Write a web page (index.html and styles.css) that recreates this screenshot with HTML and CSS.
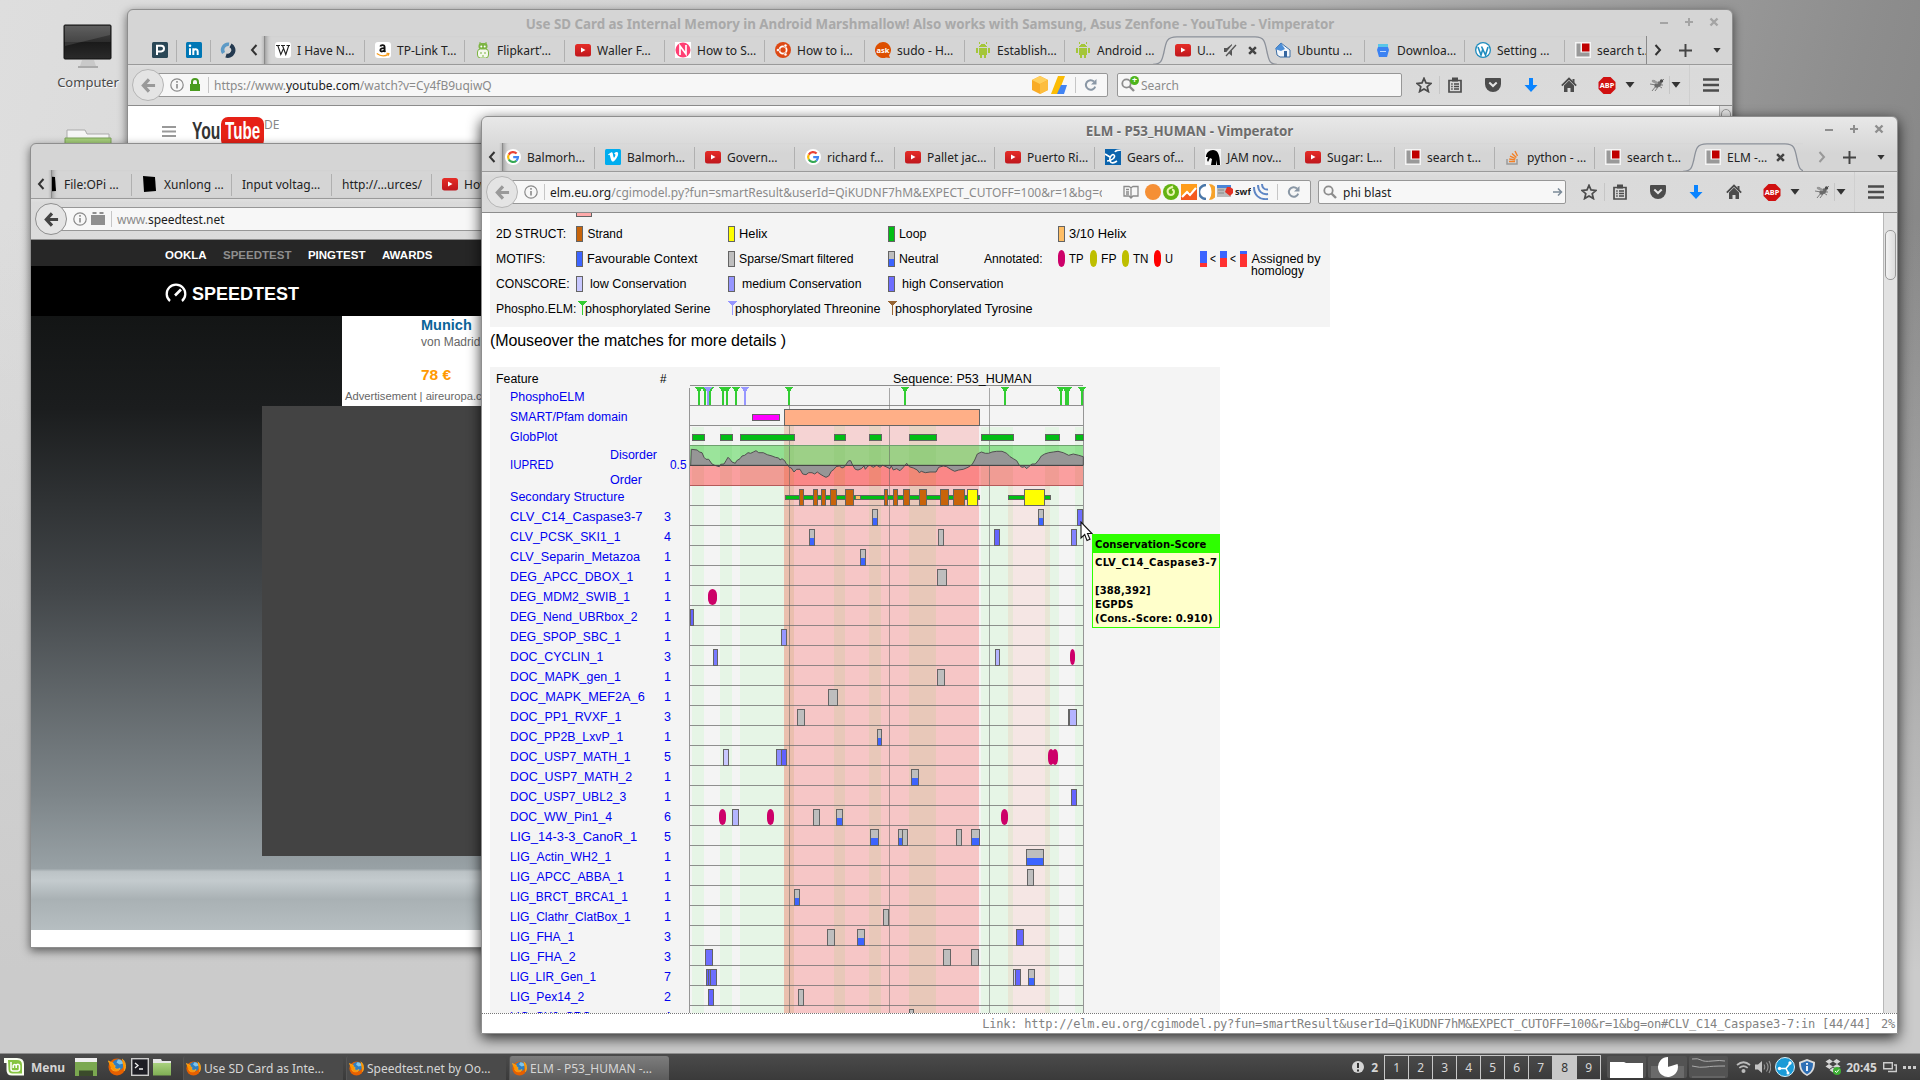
FILE: index.html
```html
<!DOCTYPE html>
<html lang="en">
<head>
<meta charset="utf-8">
<title>Desktop</title>
<link rel="stylesheet" href="styles.css">
</head>
<body>
<svg class="defs" aria-hidden="true">
  <defs>
    <linearGradient id="g-red" x1="0" y1="0" x2="0" y2="1"><stop offset="0" stop-color="#e52d27"/><stop offset="1" stop-color="#bf171d"/></linearGradient>
    <linearGradient id="g-screen" x1="0" y1="0" x2="0" y2="1"><stop offset="0" stop-color="#4a4a4a"/><stop offset=".5" stop-color="#2c2c2c"/><stop offset=".5" stop-color="#1a1a1a"/><stop offset="1" stop-color="#2a2a2a"/></linearGradient>
    <linearGradient id="g-green" x1="0" y1="0" x2="0" y2="1"><stop offset="0" stop-color="#a9d17e"/><stop offset="1" stop-color="#7fae54"/></linearGradient>
    <symbol id="i-yt" viewBox="0 0 16 16"><rect y="2" width="16" height="12.500" rx="2.500" fill="url(#g-red)"/><path d="M6 5.500v5l4.500-2.500z" fill="#fff"/></symbol>
    <symbol id="i-google" viewBox="0 0 16 16"><circle cx="8" cy="8" r="8" fill="#fff"/><g fill="none" stroke-width="2.200"><path d="M11.600 4.600A4.900 4.900 0 0 0 3.800 5.600" stroke="#ea4335"/><path d="M3.800 5.600a5 5 0 0 0 0 4.900" stroke="#fbbc05"/><path d="M3.800 10.500a4.900 4.900 0 0 0 7.600 1.200" stroke="#34a853"/><path d="M11.400 11.700A4.900 4.900 0 0 0 13 8.100H8.200" stroke="#4285f4"/></g></symbol>
    <symbol id="i-vimeo" viewBox="0 0 16 16"><rect width="16" height="16" rx="1.500" fill="#00adef"/><path d="M3 5.600l3-2.200c1.300-.6 1.700.4 2 2 .3 1.900.6 3.200 1 3.200s1.400-1.800 1.400-2.700-.8-.9-1.400-.7c.5-1.600 1.500-2.400 2.700-2.300 1.600.1 1.600 1.700 1.300 3-.6 2.300-3.600 6.700-5.200 6.700-1.700 0-2.200-3.800-2.900-6.200-.3-.9-.7-.7-1.400-.2z" fill="#fff"/></symbol>
    <symbol id="i-elm" viewBox="0 0 16 16"><rect width="16" height="16" fill="#f4f4f4"/><path d="M1.500 1.500h4v9h9v4h-13z" fill="#999"/><rect x="7" y="1.500" width="7.500" height="8" fill="#c00000"/></symbol>
    <symbol id="i-p" viewBox="0 0 16 16"><rect width="16" height="16" rx="1.500" fill="#2a4756"/><path d="M5 13V3.800h4.200a2.600 2.600 0 0 1 0 5.600H5" fill="none" stroke="#fff" stroke-width="2"/></symbol>
    <symbol id="i-in" viewBox="0 0 16 16"><rect width="16" height="16" rx="1.500" fill="#0077b5"/><path d="M4 6.300V13M7.300 13V6.300M7.300 9.500c0-3 4.400-3.200 4.400 0V13" fill="none" stroke="#fff" stroke-width="2"/><circle cx="4" cy="3.700" r="1.300" fill="#fff"/></symbol>
    <symbol id="i-disc" viewBox="0 0 16 16"><path d="M9 2.300A5.600 5.600 0 0 0 3.600 11" stroke="#5d9ac6" stroke-width="3.600" fill="none"/><path d="M10.500 3.300A5.600 5.600 0 0 1 6 13.500" stroke="#243a50" stroke-width="4.200" fill="none"/></symbol>
    <symbol id="i-wiki" viewBox="0 0 16 16"><rect width="16" height="16" rx="3" fill="#fff"/><path d="M1 3.500h4M6 3.500h4M11.500 3.500H15M2.800 3.500l3 9L8.300 7M7.500 3.500l3.300 9 3-9" fill="none" stroke="#222" stroke-width="1.100"/></symbol>
    <symbol id="i-amazon" viewBox="0 0 16 16"><rect width="16" height="16" rx="3" fill="#fff"/><path d="M5.300 4.500c.5-2 4.300-2 4.300.5v3.500c0 .7.500 1 .8 1.300M9.600 6.200C7 6 5.300 6.600 5.300 8.300s3.600 1.700 4.300-.8" fill="none" stroke="#111" stroke-width="1.800"/><path d="M1.800 11.500c4 3 8 3 11.700.6M11.500 11.400l2.300.2-.5 2" fill="none" stroke="#f79c1c" stroke-width="1.300"/></symbol>
    <symbol id="i-flip" viewBox="0 0 16 16"><rect x="3.500" y="1" width="9" height="6.500" rx="3" fill="#7db443"/><rect x="2.500" y="7" width="11" height="9" rx="3" fill="#f4f8ee" stroke="#7db443"/><path d="M5 11h2M9 11h2M8 13v2M5 0v2M11 0v2" stroke="#7db443"/><circle cx="6.300" cy="4.500" r="1" fill="#fff"/><circle cx="9.700" cy="4.500" r="1" fill="#fff"/></symbol>
    <symbol id="i-pink" viewBox="0 0 16 16"><rect width="16" height="16" fill="#fff"/><circle cx="8" cy="8" r="7.500" fill="#ff3f73"/><path d="M5 13V4l6 8V3" fill="none" stroke="#fff" stroke-width="1.700"/></symbol>
    <symbol id="i-ubuntu" viewBox="0 0 16 16"><circle cx="8" cy="8" r="8" fill="#dd4814"/><circle cx="8" cy="8" r="3.600" fill="none" stroke="#fff" stroke-width="1.800"/><g fill="#fff" stroke="#dd4814" stroke-width=".6"><circle cx="3" cy="8" r="1.600"/><circle cx="10.500" cy="3.600" r="1.600"/><circle cx="10.500" cy="12.400" r="1.600"/></g></symbol>
    <symbol id="i-ask" viewBox="0 0 16 16"><path d="M8 0a8 8 0 0 1 6 13.200l1 2.800-4-.6A8 8 0 1 1 8 0z" fill="#dd4f00"/><text x="8" y="10.500" font-family="Noto Sans" font-size="7.500" font-weight="700" fill="#fff" text-anchor="middle">ask</text></symbol>
    <symbol id="i-android" viewBox="0 0 16 16" shape-rendering="crispEdges"><g fill="#a4c639"><path d="M4 5c0-4 8-4 8 0zM4 6h8v7H4zM1 6h2v5H1zM13 6h2v5h-2zM5 13h2v3H5zM9 13h2v3H9zM4 0h1v2H4zM11 0h1v2h-1z"/></g></symbol>
    <symbol id="i-house" viewBox="0 0 16 16"><path d="M1 6l5-5 9 7v7H5L2 13z" fill="#f2f6fb" stroke="#3c6ea5"/><path d="M0 7l6-6 4 6-4 2z" fill="#4d8fd8"/><path d="M9 15V9h3v6z" fill="#3566a0"/></symbol>
    <symbol id="i-dl" viewBox="0 0 16 16"><path d="M3 2h10v4H3z" fill="#59c6e8"/><path d="M3 5h10l1 3-2 7H4L2 8z" fill="#3b82f2"/><path d="M5 9h6v1H5z" fill="#bcd8ff"/></symbol>
    <symbol id="i-wp" viewBox="0 0 16 16"><circle cx="8" cy="8" r="8" fill="#1e8cbe"/><circle cx="8" cy="8" r="6.700" fill="#fff"/><path d="M3 5l3 8L8 6.500M6.500 4.500l4 8.500L13 5" fill="none" stroke="#1e8cbe" stroke-width="1.600"/></symbol>
    <symbol id="i-gears" viewBox="0 0 16 16"><rect width="16" height="16" fill="#0b64ad"/><path d="M2 12c5 0 9-4 7-6s-5 3-4 6 4 2 7 0M0 5l5 3M10 3c1-2 4-2 6-2" stroke="#fff" fill="none" stroke-width="1.600"/></symbol>
    <symbol id="i-jam" viewBox="0 0 16 16"><rect width="16" height="16" fill="#f5f5f5"/><path d="M1 8c0-4 3-7 7-7s7 3 7 15h-3v-5l-1 5H6l1-6-2-1-2 4-1-2 1-3z" fill="#000"/></symbol>
    <symbol id="i-so" viewBox="0 0 16 16"><path d="M2 10v5h10v-5" fill="none" stroke="#9a9a9a" stroke-width="1.500"/><path d="M4 12.500h6M4.200 10l6 .9M5 7.200l5.500 2.400M7 4.500l4.400 4M10 2l2.500 5" stroke="#f48024" stroke-width="1.400"/></symbol>
    <symbol id="i-blk" viewBox="0 0 16 16"><path d="M1 0l12 1 1 14-12 1z" fill="#000"/></symbol>
    <symbol id="i-back" viewBox="0 0 16 16"><path d="M8.500 1.500L2.500 8l6 6.500M3 8h12" fill="none" stroke="currentColor" stroke-width="3.400"/></symbol>
    <symbol id="i-info" viewBox="0 0 14 14"><circle cx="7" cy="7" r="6.200" fill="none" stroke="#8a8a8a" stroke-width="1.200"/><path d="M7 6v4.500M7 3v1.700" stroke="#8a8a8a" stroke-width="1.600"/></symbol>
    <symbol id="i-lock" viewBox="0 0 12 14"><rect x="1" y="6" width="10" height="7" fill="#4a9b1f"/><path d="M3 6V4a3 3 0 0 1 6 0v2" fill="none" stroke="#4a9b1f" stroke-width="2"/></symbol>
    <symbol id="i-lego" viewBox="0 0 14 14"><path d="M0 3h14v10H0zM1.500 0h4v2h-4zM8.500 0h4v2h-4z" fill="#8f8f8f"/></symbol>
    <symbol id="i-reload" viewBox="0 0 14 14"><path d="M11.200 8.600A4.800 4.800 0 1 1 10 3.500" fill="none" stroke="#8a97a5" stroke-width="2"/><path d="M12.500 1v5.500H7z" fill="#8a97a5"/></symbol>
    <symbol id="i-mag" viewBox="0 0 14 14"><circle cx="5.500" cy="5.500" r="4.200" fill="none" stroke="#8d8d8d" stroke-width="1.800"/><path d="M8.500 8.500l4.500 4.500" stroke="#8d8d8d" stroke-width="2.400"/></symbol>
    <symbol id="i-star" viewBox="0 0 16 16"><path d="M8 1.300l2 4.600 5 .5-3.800 3.300 1.200 4.900L8 12l-4.400 2.600 1.200-4.900L1 6.400l5-.5z" fill="none" stroke="#4c4c4c" stroke-width="1.700"/></symbol>
    <symbol id="i-clip" viewBox="0 0 16 16"><path d="M2 3.500h12v11.500H2z" fill="none" stroke="#4c4c4c" stroke-width="1.700"/><path d="M5 .5h6v4H5z" fill="#4c4c4c"/><path d="M4.200 7h1.500M4.200 9.500h1.500M4.200 12h1.500M7 7h5M7 9.500h5M7 12h5" stroke="#4c4c4c" stroke-width="1.300"/></symbol>
    <symbol id="i-pocket" viewBox="0 0 16 16"><path d="M0 2q0-1 1-1h14q1 0 1 1v5a8 8 0 0 1-16 0z" fill="#4c4c4c"/><path d="M4.300 5.500L8 9l3.700-3.500" fill="none" stroke="#e4e4e4" stroke-width="2"/></symbol>
    <symbol id="i-down" viewBox="0 0 16 16"><path d="M6 1h4v7h4.500L8 15 1.500 8H6z" fill="#0a84ff"/></symbol>
    <symbol id="i-home" viewBox="0 0 16 16"><path d="M8 3.500l5 5V15H9.500v-4h-3v4H3V8.500z" fill="#4c4c4c"/><path d="M.8 8.600L8 1.600l7.200 7" fill="none" stroke="#4c4c4c" stroke-width="1.800"/><path d="M11.500 2h2v4h-2z" fill="#4c4c4c"/></symbol>
    <symbol id="i-abp" viewBox="0 0 18 18"><path d="M5.300 0h7.400L18 5.300v7.400L12.700 18H5.300L0 12.700V5.300z" fill="#d01010"/><text x="9" y="12" font-family="Noto Sans" font-size="7.800" font-weight="700" fill="#fff" text-anchor="middle">ABP</text></symbol>
    <symbol id="i-bug" viewBox="0 0 16 16"><path d="M3 14l4-5M1 7l6 1M6 14l3-4M5 3l3 4M15 2l-4 4M13 11l-3-2M14 8h-3" stroke="#7b7b7b" fill="none"/><ellipse cx="9" cy="7.500" rx="4" ry="2.400" fill="#6a6a6a" transform="rotate(-35 9 7.500)"/><ellipse cx="6" cy="5" rx="3.500" ry="1.500" fill="#999" transform="rotate(25 6 5)"/><circle cx="12.500" cy="4" r="1.700" fill="#4a4a4a"/></symbol>
    <symbol id="i-ham" viewBox="0 0 16 14"><path d="M0 1.500h16M0 7h16M0 12.500h16" stroke="#4c4c4c" stroke-width="2.600"/></symbol>
    <symbol id="i-caret" viewBox="0 0 10 6"><path d="M.5 0h9L5 5.800z" fill="#333"/></symbol>
    <symbol id="i-left" viewBox="0 0 8 12"><path d="M6.500 1L2 6l4.500 5" fill="none" stroke="#333" stroke-width="2"/></symbol>
    <symbol id="i-right" viewBox="0 0 8 12"><path d="M1.500 1L6 6l-4.500 5" fill="none" stroke="currentColor" stroke-width="2"/></symbol>
    <symbol id="i-plus" viewBox="0 0 12 12"><path d="M6 0v12M0 6h12" stroke="#444" stroke-width="1.800"/></symbol>
    <symbol id="i-x" viewBox="0 0 8 8"><path d="M1 1l6 6M7 1L1 7" stroke="#444" stroke-width="2.200"/></symbol>
    <symbol id="i-mute" viewBox="0 0 14 14"><path d="M1 5h3l5-4v12L4 9H1z" fill="#555"/><path d="M2 13L12 1" stroke="#d9d9d9" stroke-width="3"/><path d="M3 13L13 2" stroke="#555" stroke-width="1.300"/></symbol>
    <symbol id="i-ff" viewBox="0 0 18 18"><circle cx="9" cy="9" r="8.500" fill="#e66000"/><circle cx="10" cy="6.800" r="5.600" fill="#2f7fc1"/><path d="M10 1.500c3 0 5 2 5.500 4l-4 1-3-2z" fill="#7fc4ea"/><path d="M0 3c2 0 3 2 5 2 0 2 3 2 2 4s3 3 5 1c0 4-8 4-9 0M14 1c4 2 4.500 9 2 12" fill="#ff9500" stroke="#ffb52b" stroke-width=".7"/></symbol>
    <symbol id="win-btns" viewBox="0 0 64 12"><g stroke="currentColor" stroke-width="2" fill="none"><path d="M1 7h8M26 6h8M30 2v8"/><path d="M51.500 2.500l7 7M58.500 2.500l-7 7" stroke-width="2.400"/></g></symbol>
    <symbol id="i-tab" viewBox="0 0 124 29"><path d="M0 29C9 28.500 9 24 11 16 13 5 14 1 24 1h78c9 0 10 4 12 15 2 8 2 12.500 10 13z" fill="#dadada"/><path d="M0 28.500C9 28 9 24 11 16 13 5 14 .8 24 .8h78c9 0 10 4.200 12 15.200 2 8 2 12 10 12.500" fill="none" stroke="#8c919a" stroke-width="1.300"/></symbol>
  </defs>
</svg>

<main class="desktop">
  <div class="desk-icon computer">
    <svg width="50" height="46" viewBox="0 0 50 46"><rect x="1" y="1" width="47" height="34" rx="1" fill="url(#g-screen)" stroke="#111"/><path d="M2 2h45v9L2 22z" fill="#fff" opacity=".12"/><path d="M19 36h12l2 6H17z" fill="#c9c9c9"/><path d="M15 42h20v2H15z" fill="#aaa"/></svg>
    <span>Computer</span>
  </div>
  <div class="desk-icon folder">
    <svg width="48" height="40" viewBox="0 0 48 40"><path d="M3 1h18l2 4h22v8H3z" fill="#f6f6f6" stroke="#aaa"/><path d="M1 9h46v30H1z" fill="url(#g-green)" stroke="#7da35a"/></svg>
  </div>

  <section class="window win-youtube">
    <header class="titlebar"><span>Use SD Card as Internal Memory in Android Marshmallow! Also works with Samsung, Asus Zenfone - YouTube - Vimperator</span><svg class="btns"><use href="#win-btns"/></svg></header>
    <div class="tabstrip">
      <div class="pinned"><svg><use href="#i-p"/></svg></div>
      <div class="pinned"><svg><use href="#i-in"/></svg></div>
      <div class="pinned last"><svg><use href="#i-disc"/></svg></div>
      <div class="scroll-left"><svg><use href="#i-left"/></svg></div>
      <div class="tabs">
        <div class="tab"><svg><use href="#i-wiki"/></svg>I Have N…</div>
        <div class="tab"><svg><use href="#i-amazon"/></svg>TP-Link T…</div>
        <div class="tab"><svg><use href="#i-flip"/></svg>Flipkart’…</div>
        <div class="tab"><svg><use href="#i-yt"/></svg>Waller F…</div>
        <div class="tab"><svg><use href="#i-pink"/></svg>How to S…</div>
        <div class="tab"><svg><use href="#i-ubuntu"/></svg>How to i…</div>
        <div class="tab"><svg><use href="#i-ask"/></svg>sudo - H…</div>
        <div class="tab"><svg><use href="#i-android"/></svg>Establish…</div>
        <div class="tab nosep"><svg><use href="#i-android"/></svg>Android …</div>
        <div class="tab nosep active"><svg class="shape"><use href="#i-tab"/></svg><svg><use href="#i-yt"/></svg>U…<svg class="mute"><use href="#i-mute"/></svg><svg class="x"><use href="#i-x"/></svg></div>
        <div class="tab"><svg><use href="#i-house"/></svg>Ubuntu …</div>
        <div class="tab"><svg><use href="#i-dl"/></svg>Downloa…</div>
        <div class="tab"><svg><use href="#i-wp"/></svg>Setting …</div>
        <div class="tab nosep"><svg><use href="#i-elm"/></svg>search t…</div>
      </div>
      <div class="strip-end shade"><svg class="r"><use href="#i-right"/></svg><svg class="p"><use href="#i-plus"/></svg><svg class="c"><use href="#i-caret"/></svg></div>
    </div>
    <nav class="navbar">
      <div class="back dim"><svg><use href="#i-back"/></svg></div>
      <div class="urlbar"><svg class="info"><use href="#i-info"/></svg><svg class="lock"><use href="#i-lock"/></svg><i></i><span class="url">https://www.<b>youtube.com</b>/watch?v=Cy4fB9uqiwQ</span>
        <div class="url-icons"><svg width="18" height="18" viewBox="0 0 18 18"><path d="M9 0l8 4v10l-8 4-8-4V4z" fill="#f9ab25"/><path d="M9 0l8 4-8 4-8-4z" fill="#ffcf5c"/><path d="M9 8v10l8-4V4z" fill="#fdbd3e"/></svg><svg width="18" height="18" viewBox="0 0 18 18"><path d="M8 0h7L8 18H1z" fill="#fbbc05"/><path d="M11 9h6l-3 9H7z" fill="#4284f3"/></svg><i></i><svg class="reload"><use href="#i-reload"/></svg></div>
      </div>
      <div class="search hint"><svg><use href="#i-mag"/></svg><em class="plus">+</em>Search</div>
      <div class="tools"><svg><use href="#i-star"/></svg><i></i><svg><use href="#i-clip"/></svg><svg><use href="#i-pocket"/></svg><svg><use href="#i-down"/></svg><svg><use href="#i-home"/></svg><svg class="abp"><use href="#i-abp"/></svg><svg class="car"><use href="#i-caret"/></svg><svg class="bug"><use href="#i-bug"/></svg><i class="s2"></i><svg class="car2"><use href="#i-caret"/></svg><i class="s3"></i><svg class="ham"><use href="#i-ham"/></svg></div>
    </nav>
    <div class="page yt-page">
      <svg width="14" height="11" viewBox="0 0 14 11"><path d="M0 1h14M0 5.500h14M0 10h14" stroke="#999" stroke-width="1.800"/></svg>
      <div class="yt-logo"><span>You</span><b><span>Tube</span></b><small>DE</small></div>
      <div class="yt-scroll"></div>
    </div>
  </section>

  <section class="window win-speed">
    <header class="titlebar"></header>
    <div class="tabstrip">
      <div class="scroll-left"><svg><use href="#i-left"/></svg></div>
      <div class="tabs clipped">
        <div class="tab"><svg><use href="#i-blk"/></svg>File:OPi …</div>
        <div class="tab"><svg><use href="#i-blk"/></svg>Xunlong …</div>
        <div class="tab">Input voltag…</div>
        <div class="tab">http://…urces/</div>
        <div class="tab"><svg><use href="#i-yt"/></svg>How to…</div>
      </div>
    </div>
    <nav class="navbar">
      <div class="back"><svg><use href="#i-back"/></svg></div>
      <div class="urlbar"><svg class="info"><use href="#i-info"/></svg><svg class="lego"><use href="#i-lego"/></svg><i></i><span class="url">www.<b>speedtest.net</b></span></div>
    </nav>
    <div class="page st-page">
      <div class="st-nav"><span>OOKLA</span><span class="off">SPEEDTEST</span><span>PINGTEST</span><span>AWARDS</span></div>
      <div class="st-head"><svg width="22" height="20" viewBox="0 0 22 20"><path d="M5 18A9.300 9.300 0 1 1 17 18" fill="none" stroke="#fff" stroke-width="2.300"/><path d="M10 12.500l6-6" stroke="#fff" stroke-width="2.600"/></svg><svg class="st-word" width="108" height="20"><text x="0" y="16.500" textLength="107" lengthAdjust="spacingAndGlyphs">SPEEDTEST</text></svg></div>
      <div class="st-body">
        <div class="ad"><strong>Munich</strong><span>von Madrid</span><em>78 €</em><small>Advertisement | aireuropa.com</small></div>
        <div class="dark"></div>
      </div>
      <div class="st-foot"></div>
    </div>
  </section>

  <section class="window win-elm">
    <header class="titlebar"><span>ELM - P53_HUMAN - Vimperator</span><svg class="btns"><use href="#win-btns"/></svg></header>
    <div class="tabstrip">
      <div class="scroll-left"><svg><use href="#i-left"/></svg></div>
      <div class="tabs clipped">
        <div class="tab"><svg><use href="#i-google"/></svg>Balmorh…</div>
        <div class="tab"><svg><use href="#i-vimeo"/></svg>Balmorh…</div>
        <div class="tab"><svg><use href="#i-yt"/></svg>Govern…</div>
        <div class="tab"><svg><use href="#i-google"/></svg>richard f…</div>
        <div class="tab"><svg><use href="#i-yt"/></svg>Pallet jac…</div>
        <div class="tab"><svg><use href="#i-yt"/></svg>Puerto Ri…</div>
        <div class="tab"><svg><use href="#i-gears"/></svg>Gears of…</div>
        <div class="tab"><svg><use href="#i-jam"/></svg>JAM nov…</div>
        <div class="tab"><svg><use href="#i-yt"/></svg>Sugar: L…</div>
        <div class="tab"><svg><use href="#i-elm"/></svg>search t…</div>
        <div class="tab"><svg><use href="#i-so"/></svg>python - …</div>
        <div class="tab nosep"><svg><use href="#i-elm"/></svg>search t…</div>
        <div class="tab nosep active"><svg class="shape"><use href="#i-tab"/></svg><svg><use href="#i-elm"/></svg>ELM -…<svg class="x"><use href="#i-x"/></svg></div>
      </div>
      <div class="strip-end"><svg class="r off"><use href="#i-right"/></svg><svg class="p"><use href="#i-plus"/></svg><svg class="c"><use href="#i-caret"/></svg></div>
    </div>
    <nav class="navbar">
      <div class="back dim"><svg><use href="#i-back"/></svg></div>
      <div class="urlbar"><svg class="info"><use href="#i-info"/></svg><i></i><span class="url cut"><b>elm.eu.org</b>/cgimodel.py?fun=smartResult&amp;userId=QiKUDNF7hM&amp;EXPECT_CUTOFF=100&amp;r=1&amp;bg=on</span>
        <div class="url-icons">
          <svg class="reader" width="16" height="16" viewBox="0 0 16 16"><path d="M1 2.500h5l2 1.200 2-1.200h5v9.500h-5l-2 2-2-2H1zM8 4v9M3 5.500h3M3 8h3M3 10h3" fill="none" stroke="#8a8a8a" stroke-width="1.300"/></svg>
          <svg width="16" height="16" viewBox="0 0 16 16"><circle cx="8" cy="8" r="8" fill="#f58f35"/></svg>
          <svg width="16" height="16" viewBox="0 0 16 16"><circle cx="8" cy="8" r="8" fill="#63b312"/><path d="M6 4.500c-2.500 2-1.500 6.500 2 6.500s4-5 1-5.500M6 4.500l4-2" fill="none" stroke="#e8f5b0" stroke-width="2"/></svg>
          <svg width="16" height="16" viewBox="0 0 16 16"><rect width="16" height="16" fill="#f5591f"/><path d="M0 0h16v5L0 12z" fill="#ff9c1a"/><path d="M1 13l5-5 3 3 6-7" fill="none" stroke="#fff" stroke-width="2.200"/></svg>
          <svg width="16" height="16" viewBox="0 0 16 16"><circle cx="8" cy="8" r="8" fill="#fff"/><path d="M7 1a7 7 0 0 0 0 14" fill="none" stroke="#4a77a8" stroke-width="2.400"/><path d="M10 0a8 8 0 0 1 0 16 14 14 0 0 0 0-16z" fill="#f6a32b"/></svg>
          <svg width="16" height="16" viewBox="0 0 16 16"><rect y="1" width="14" height="12" fill="#bbb"/><rect y="1" width="14" height="3" fill="#4b85d8"/><path d="M10 3h3l3 2v4l-3 3-5-4z" fill="#e33225"/><path d="M1 6h6M1 9h6" stroke="#888"/></svg>
          <svg width="16" height="16" viewBox="0 0 16 16"><text x="8" y="11" text-anchor="middle" font-family="Noto Sans" font-size="9" font-weight="700" fill="#222" textLength="16" lengthAdjust="spacingAndGlyphs">swf</text></svg>
          <svg width="16" height="16" viewBox="0 0 16 16"><path d="M1 3c0 8 5 13 14 12M5 1c0 6 4 10 10 9M9 0c0 3 2 6 6 5.500" fill="none" stroke="#5e86c5" stroke-width="2"/></svg>
          <i></i><svg class="reload"><use href="#i-reload"/></svg>
        </div>
      </div>
      <div class="search"><svg><use href="#i-mag"/></svg>phi blast<svg class="go" viewBox="0 0 10 8"><path d="M0 4h8M5 .5L8.500 4 5 7.500" fill="none" stroke="#7b8a98" stroke-width="1.500"/></svg></div>
      <div class="tools"><svg><use href="#i-star"/></svg><i></i><svg><use href="#i-clip"/></svg><svg><use href="#i-pocket"/></svg><svg><use href="#i-down"/></svg><svg><use href="#i-home"/></svg><svg class="abp"><use href="#i-abp"/></svg><svg class="car"><use href="#i-caret"/></svg><svg class="bug"><use href="#i-bug"/></svg><i class="s2"></i><svg class="car2"><use href="#i-caret"/></svg><i class="s3"></i><svg class="ham"><use href="#i-ham"/></svg></div>
    </nav>
    <div class="elm-main">
      <div class="elm-page">
        <svg id="legend" class="legend" width="840" height="114" viewBox="490 213 840 114"></svg>
        <p class="note">(Mouseover the matches for more details )</p>
        <svg id="chart" class="chart" width="730" height="646" viewBox="490 367 730 646"></svg>
      </div>
      <div class="scrollbar"><div class="thumb"></div></div>
    </div>
    <footer class="status"><span>Link: http://elm.eu.org/cgimodel.py?fun=smartResult&amp;userId=QiKUDNF7hM&amp;EXPECT_CUTOFF=100&amp;r=1&amp;bg=on#CLV_C14_Caspase3-7:in [44/44]</span><span>2%</span></footer>
  </section>

  <div class="tooltip">
    <div class="tip-head">Conservation-Score</div>
    <div class="tip-body"><span class="tip-name">CLV_C14_Caspase3-7</span><br><br>[388,392]<br>EGPDS<br>(Cons.-Score: 0.910)</div>
  </div>
  <svg class="cursor" width="13" height="21" viewBox="0 0 13 21"><path d="M1 1v16l3.700-3.500L7 19.500l3-1.200-2.500-5.800H12z" fill="#fff" stroke="#111" stroke-width="1.100"/></svg>

  <footer class="taskbar">
    <svg class="mint" width="20" height="18" viewBox="0 0 20 18"><path d="M0 0h13q7 0 7 6v11.500H8q-5.500 0-5.500-5.500V5H0z" fill="#fafff2"/><path d="M4 2h9q5 0 5 5v8.500H8.500q-4 0-4-4z" fill="#86c442"/><path d="M7 4v7q0 2 2 2h4.500q2 0 2-2V7.500a1.700 1.700 0 0 0-3.300 0V10M12.200 7.500a1.600 1.600 0 0 0-3 0V10" fill="none" stroke="#fff" stroke-width="1.500"/></svg>
    <b class="menu">Menu</b>
    <svg class="l1" width="22" height="18" viewBox="0 0 22 18"><rect width="22" height="18" fill="#7ba850"/><rect width="22" height="4" fill="#eee"/><rect x="4" y="12.500" width="14" height="5.500" fill="#3b4b2b"/></svg>
    <svg class="l2" width="18" height="18"><use href="#i-ff"/></svg>
    <svg class="l3" width="18" height="18" viewBox="0 0 18 18"><rect x=".7" y=".7" width="16.600" height="16.600" fill="#1d1d24" stroke="#ccc" stroke-width="1.400"/><path d="M4 5l3 2.500L4 10M8 11h4" fill="none" stroke="#eee" stroke-width="1.300"/></svg>
    <svg class="l4" width="18" height="18" viewBox="0 0 18 18"><path d="M0 1h8l1 2h9v5H0z" fill="#e6e6e6"/><path d="M0 5h18v12.500H0z" fill="url(#g-green)"/></svg>
    <div class="tasks">
      <div class="task"><svg><use href="#i-ff"/></svg>Use SD Card as Inte…</div>
      <div class="task"><svg><use href="#i-ff"/></svg>Speedtest.net by Oo…</div>
      <div class="task on"><svg><use href="#i-ff"/></svg>ELM - P53_HUMAN -…</div>
    </div>
    <div class="tray">
      <svg class="alert" width="12" height="13" viewBox="0 0 12 13"><circle cx="6" cy="6" r="6" fill="#d5d5d5"/><path d="M6 2v5M6 8.500v2" stroke="#333" stroke-width="2"/></svg><b class="cnt">2</b>
      <div class="spaces"><span>1</span><span>2</span><span>3</span><span>4</span><span>5</span><span>6</span><span>7</span><span class="cur">8</span><span>9</span></div>
      <div class="graphs">
        <svg viewBox="0 0 39 22"><path d="M3 6h14l2 1h17v15H3z" fill="#fff"/></svg>
        <svg viewBox="0 0 39 22"><path d="M3 10h33v12H3z" fill="#6a6a6a"/><path d="M20 11V1A10 10 0 1 0 29.500 8z" fill="#fff"/></svg>
        <svg viewBox="0 0 39 22"><path d="M3 3q6-1 9 1t11 1 13 0M3 10q8 2 14 1t19-1" fill="none" stroke="#aaa"/><path d="M3 21h33" stroke="#777"/></svg>
      </div>
      <svg class="wifi" width="15" height="14" viewBox="0 0 15 14"><path d="M1 5q6.500-5.500 13 0M3.300 7.800q4.200-3.500 8.400 0" fill="none" stroke="#bbb" stroke-width="1.700"/><circle cx="7.500" cy="11" r="2" fill="#bbb"/></svg>
      <svg class="vol" width="16" height="14" viewBox="0 0 16 14"><path d="M0 4.500h3l4-3.500v12L3 9.500H0z" fill="#c4c4c4"/><path d="M9 4.500q1.500 2.500 0 5M11.500 2.500q3 4.500 0 9M14 1q3.500 6 0 12" fill="none" stroke="#999" stroke-width="1.100"/></svg>
      <svg class="orb" width="20" height="20" viewBox="0 0 20 20"><circle cx="10" cy="10" r="9.500" fill="#1a9ad6" stroke="#d8f0fa"/><path d="M4 11.500h7l4-5M11 11.500l2 4" fill="none" stroke="#fff" stroke-width="1.600"/><circle cx="4.500" cy="11.500" r="1.700" fill="#fff"/><circle cx="15" cy="6" r="1.700" fill="#fff"/><circle cx="13" cy="16" r="1.500" fill="#fff"/></svg>
      <svg class="shield" width="16" height="17" viewBox="0 0 16 17"><path d="M8 0l8 3c0 7-2 11-8 14C2 14 0 10 0 3z" fill="#dcdcdc"/><path d="M8 2l6 2.200c0 5-1.500 8.500-6 11-4.500-2.500-6-6-6-11z" fill="#2e6fb5"/><path d="M8 4v1.800M8 7v5" stroke="#fff" stroke-width="1.800"/></svg>
      <svg class="box" width="16" height="16" viewBox="0 0 16 16"><path d="M4.500 0L8 2.500 4 5 .5 2.500zM11.500 0L8 2.500 12 5l3.500-2.500zM.5 7.500L4 5l4 2.500L4.500 10zM15.500 7.500L12 5 8 7.500l3.500 2.500zM4.500 11L8 8.500l3.500 2.500L8 13.500z" fill="#d6d6d6"/><circle cx="12" cy="12" r="4" fill="#3fae35"/><path d="M10 12l1.500 1.500L14 10.500" fill="none" stroke="#fff"/></svg>
      <b class="clock">20:45</b>
      <svg class="disp" width="14" height="11" viewBox="0 0 14 11"><path d="M.7.700h8.600v6H.7z" fill="none" stroke="#ccc" stroke-width="1.400"/><path d="M11 3h2.300v6.500H5" fill="none" stroke="#ccc" stroke-width="1.400"/></svg>
      <svg class="dots" width="13" height="3" viewBox="0 0 13 3"><path d="M0 0h3v3H0zM5 0h3v3H5zM10 0h3v3h-3z" fill="#ccc"/></svg>
    </div>
  </footer>
</main>
<script src="chart.js"></script>
</body>
</html>
```

FILE: styles.css
```css
* { box-sizing: border-box; }
html, body { margin: 0; width: 1920px; height: 1080px; overflow: hidden; }
body { font-family: "Noto Sans", sans-serif; font-size: 12px; color: #222; }
.defs { position: absolute; width: 0; height: 0; }

.desktop {
  position: relative; width: 1920px; height: 1080px; overflow: hidden;
  background: linear-gradient(105deg, #dedede 0%, #d2d2d2 35%, #b4b4b4 60%, #8d8d8d 85%, #7c7c7c 100%);
}
.desktop::after {
  content: ""; position: absolute; inset: 0; z-index: 0;
  background: linear-gradient(180deg, rgba(203,203,203,0) 20%, rgba(203,203,203,1) 90%);
}
.desk-icon { position: absolute; z-index: 1; display: flex; flex-direction: column; align-items: center; gap: 3px; width: 80px; font-size: 13px; color: #4a4a4a; text-shadow: 1px 1px 1px #fff; }
.desk-icon.computer { left: 48px; top: 24px; }
.desk-icon.folder { left: 48px; top: 129px; }

/* windows */
.window { position: absolute; z-index: 2; display: flex; flex-direction: column; border: 1px solid #8e8e8e; border-radius: 6px 6px 0 0; background: #d5d5d5; box-shadow: 0 3px 10px rgba(0,0,0,.55); overflow: hidden; }
.win-youtube { left: 127px; top: 9px; width: 1606px; height: 700px; }
.win-speed { left: 30px; top: 143px; width: 900px; height: 805px; }
.win-elm { left: 481px; top: 116px; width: 1417px; height: 918px; box-shadow: 0 4px 14px rgba(0,0,0,.8); background: linear-gradient(#e8e8e8, #d5d5d5 36px); }
.titlebar { flex: 0 0 26px; display: flex; align-items: center; justify-content: center; position: relative; font-weight: 700; font-size: 13.330px; color: #a9a9a9; padding-top: 1px; }
.titlebar span { white-space: nowrap; }
.win-elm .titlebar { color: #6c6c6c; text-shadow: 0 1px 0 #f4f4f4; }
.btns { position: absolute; right: 9px; top: 6px; width: 64px; height: 12px; color: #a4a4a4; }
.win-elm .btns { color: #8e8e8e; }

.tabstrip { flex: 0 0 29px; display: flex; align-items: stretch; border-bottom: 1px solid #9a9a9a; }
.tabstrip svg { width: 16px; height: 16px; flex: none; }
.pinned { width: 34px; display: flex; align-items: center; padding-left: 9px; position: relative; }
.pinned:first-child { width: 49px; padding-left: 24px; }
.pinned:not(.last)::after, .tab:not(.nosep)::after { content: ""; position: absolute; right: 0; top: 4px; bottom: 2px; width: 1px; background: #b0b0b0; }
.scroll-left { width: 21px; display: flex; align-items: center; justify-content: center; border-right: 1px solid #8a8a8a; background: linear-gradient(90deg, transparent 85%, rgba(0,0,0,.12)); }
.win-youtube .scroll-left { width: 22px; margin-left: -2px; }
.tabstrip .scroll-left svg { width: 8px; height: 12px; }
.tabs { display: flex; flex: 1; min-width: 0; overflow: hidden; box-shadow: inset 5px 0 5px -4px rgba(0,0,0,.35); }
.tabs.clipped .tab:first-child { margin-left: -8px; }
.win-speed .tabs.clipped .tab:first-child { margin-left: -20px; }
.tab { flex: 0 0 100px; position: relative; display: flex; align-items: center; gap: 6px; padding-left: 10px; white-space: nowrap; }
.tab.active { z-index: 2; }
.tab.active > * { position: relative; }
.tabstrip .tab.active .shape { position: absolute; left: -12px; top: 0; width: 124px; height: 29px; z-index: -1; }
.tabstrip .mute { width: 14px; height: 14px; margin-left: 2px; }
.tabstrip .x { width: 9px; height: 9px; margin-left: 5px; }
.win-elm .tabstrip .x { margin-left: 3px; }
.win-youtube .tabs { flex: 0 0 1381px; }
.win-elm .tabs { flex: 0 0 1300px; }
.strip-end { flex: 1; display: flex; align-items: center; padding-left: 7px; }
.strip-end.shade { border-left: 1px solid #8a8a8a; }
.win-elm .strip-end { padding-left: 15px; }
.tabstrip .strip-end .r { width: 8px; height: 12px; color: #333; }
.tabstrip .strip-end .r.off { color: #999; }
.tabstrip .strip-end .p { width: 13px; height: 13px; margin-left: 17px; }
.tabstrip .strip-end .c { width: 8px; height: 5px; margin-left: 21px; }

.navbar { flex: 0 0 41px; display: flex; align-items: center; border-bottom: 1px solid #8c8c8c; background: linear-gradient(#e0e0e0, #dadada 4px, #dbdbdb); padding-left: 4px; }
.back { width: 32px; height: 32px; border-radius: 50%; border: 1px solid #8f8f8f; background: #e4e4e4; display: flex; align-items: center; justify-content: center; z-index: 1; color: #444; flex: none; }
.back.dim { color: #999; border-color: #b5b5b5; }
.back svg { width: 15px; height: 15px; }
.urlbar, .search { height: 24px; border: 1px solid #979797; border-radius: 2px; background: #f7f7f7; display: flex; align-items: center; flex: none; }
.urlbar { margin-left: -12px; padding-left: 17px; width: 956px; }
.win-elm .urlbar { width: 805px; }
.urlbar svg { flex: none; }
.urlbar i, .tools i { width: 1px; height: 16px; background: #c6c6c6; flex: none; }
.info { width: 14px; height: 14px; margin-right: 6px; }
.win-youtube .info { margin-right: 5px; }
.lock { width: 12px; height: 14px; margin-right: 7px; }
.lego { width: 14px; height: 14px; margin-right: 6px; margin-left: -2px; }
.url { margin-left: 5px; color: #8a8a8a; white-space: nowrap; flex: 1; min-width: 0; font-size: 12px; letter-spacing: -.03px; }
.url.cut { flex: 0 0 552px; overflow: hidden; letter-spacing: 0; }
.url b { font-weight: 400; color: #1c1c1c; }
.url-icons { display: flex; align-items: center; gap: 2px; margin-left: auto; padding-right: 9px; }
.win-youtube .url-icons { gap: 1px; }
.url-icons .reader { margin-right: 4px; }
.url-icons i { margin: 0 7px 0 6px; }
.reload { width: 14px; height: 14px; }
.search { width: 248px; margin-left: 7px; padding-left: 4px; position: relative; }
.search svg { width: 14px; height: 14px; margin-right: 6px; }
.search .go { width: 10px; height: 8px; margin: 0 2px 0 auto; }
.search.hint { width: 285px; margin-left: 9px; padding-left: 3px; color: #8c8c8c; }
.search .plus { position: absolute; left: 12px; top: 2px; width: 9px; height: 9px; border-radius: 50%; background: #4db51b; color: #fff; font: 700 9px/8px "Noto Sans", sans-serif; text-align: center; }
.tools { display: flex; align-items: center; align-self: stretch; margin-left: 15px; }
.win-youtube .tools { margin-left: 14px; }
.tools svg { width: 16px; height: 16px; margin-right: 22px; flex: none; }
.tools svg:first-child { margin-right: 7px; }
.tools i { margin-right: 7px; height: 18px; }
.tools .abp { width: 18px; height: 17px; margin: 0 9px 0 -1px; }
.tools .car, .tools .car2 { width: 10px; height: 6px; margin-right: 14px; }
.tools .bug { margin-right: 4px; }
.tools .s2 { margin-right: 1px; }
.tools .car2 { margin-right: 8px; }
.tools .s3 { height: 40px; margin-right: 13px; background: #cfcfcf; }
.tools .ham { height: 14px; margin: 0; }
.page { flex: 1; background: #fff; min-height: 0; }

/* video page */
.yt-page { display: flex; align-items: flex-start; padding: 20px 0 0 34px; position: relative; }
.yt-logo { display: flex; margin: -8px 0 0 16px; font: 700 23px/27px "Liberation Sans", Arial, sans-serif; color: #333; }
.yt-logo > span { width: 29px; transform: scaleX(.68); transform-origin: 0 0; }
.yt-logo b { width: 43px; height: 30px; margin-top: -1px; background: #e62117; border-radius: 7px; color: #fff; padding: 1px 0 0 4px; }
.yt-logo b span { display: block; transform: scaleX(.66); transform-origin: 0 0; }
.yt-logo small { font: 400 12px/14px "Noto Sans", sans-serif; color: #888; margin-left: 0; }
.yt-scroll { position: absolute; right: 0; top: 0; width: 13px; height: 100%; background: #e0e0e0; border-left: 1px solid #b5b5b5; }
.yt-scroll::before { content: ""; display: block; margin: 3px 1px; height: 300px; border: 1px solid #999; border-radius: 5px; background: #e8e8e8; }

/* speed test page */
.st-page { display: flex; flex-direction: column; font-family: "Liberation Sans", Arial, sans-serif; }
.st-nav { flex: 0 0 26px; background: #262626; display: flex; align-items: center; gap: 16.500px; padding-left: 134px; padding-top: 4px; color: #fff; font-weight: 700; font-size: 11.500px; }
.st-nav .off { color: #8e8e8e; }
.st-head { flex: 0 0 50px; background: #000; display: flex; align-items: center; padding-left: 134px; gap: 5px; padding-top: 3px; }
.st-word text { font: 700 18px "Liberation Sans", Arial, sans-serif; fill: #fff; }
.st-body { flex: 0 0 614px; padding-left: 231px; background: linear-gradient(#131515 0%, #1b1d1e 15%, #43474a 45%, #7d8589 78%, #98a1a5 90%, #bcc3c6 90.500%, #c4cbce 92%, #a9b1b4 95%, #b6bec1 100%); display: flex; flex-direction: column; }
.ad { margin-left: 80px; flex: 0 0 90px; background: #fff; padding-left: 79px; display: flex; flex-direction: column; white-space: nowrap; }
.ad strong { color: #0b6498; font: 700 14.500px/18px "Liberation Sans", sans-serif; }
.ad span { font-size: 12px; line-height: 16px; color: #666; }
.ad em { color: #ff9900; font: 700 15.500px/18px "Liberation Sans", sans-serif; margin-top: 16px; }
.ad small { margin: 6px 0 0 -76px; font-size: 11.200px; color: #666; }
.dark { flex: 0 0 450px; background: #434343; }
.st-foot { flex: 1; background: #fff; }

/* ELM page */
.elm-main { flex: 0 0 800px; display: flex; background: #fff; }
.elm-page { flex: 1; padding-left: 8px; overflow: hidden; }
.legend, .chart { display: block; background: #f4f4f4; }
.note { margin: 0; height: 40px; font: 16px/28px "Liberation Sans", Arial, sans-serif; letter-spacing: -.11px; color: #000; }
.scrollbar { flex: 0 0 14px; background: #e2e2e2; border-left: 1px solid #b8b8b8; padding: 17px 1px 0; }
.thumb { height: 50px; border: 1px solid #999; border-radius: 5px; background: linear-gradient(90deg, #f2f2f2, #dcdcdc); }
.status { flex: 1; background: #fff; border-top: 1px dotted #777; display: flex; justify-content: flex-end; align-items: center; gap: 10px; padding-right: 2px; font: 12px "DejaVu Sans Mono", monospace; letter-spacing: -.226px; color: #828282; white-space: pre; }

#legend text, #chart text { font-family: "Liberation Sans", Arial, sans-serif; font-size: 12.500px; }
#chart .link { fill: #0000f0; }

.tooltip { position: absolute; z-index: 4; left: 1092px; top: 534px; width: 128px; height: 94px; border: 1px solid #2eff00; background: #ffffcb; font: 700 10px/14px "DejaVu Sans", sans-serif; color: #000; white-space: nowrap; }
.tip-head { height: 18px; background: #2eff00; padding: 3px 0 0 2px; letter-spacing: .06px; }
.tip-body { padding: 3px 0 0 2px; letter-spacing: .12px; }
.tip-name { letter-spacing: .34px; }
.cursor { position: absolute; z-index: 5; left: 1080px; top: 521px; }

/* panel */
.taskbar { position: absolute; z-index: 3; left: 0; top: 1053px; width: 1920px; height: 27px; border-top: 1px solid #8d8d8d; background: linear-gradient(#4b4b4b, #3a3a3a); display: flex; align-items: center; color: #d6d6d6; padding-left: 4px; }
.menu { margin-left: 7px; width: 44px; font-size: 12px; }
.l2 { margin-left: 11px; } .l3 { margin-left: 5px; } .l4 { margin-left: 4px; }
.tasks { display: flex; gap: 3px; margin-left: 12px; align-self: stretch; padding-top: 2px; }
.task { width: 160px; display: flex; align-items: center; gap: 3px; padding-left: 2px; background: #4a4a4a; border-left: 1px solid #555; border-radius: 3px 3px 0 0; white-space: nowrap; }
.task.on { background: linear-gradient(#7d7d7d, #5c5c5c); }
.task svg { width: 15px; height: 15px; }
.tray { margin-left: auto; display: flex; align-items: center; align-self: stretch; padding-right: 4px; }
.alert { margin-right: 7px; }
.cnt { margin-right: 6px; }
.spaces { display: flex; height: 25px; border: 1px solid #c8c8c8; margin-right: 6px; }
.spaces span { width: 24px; border-right: 1px solid #c8c8c8; display: flex; align-items: center; justify-content: center; }
.spaces span:last-child { border: 0; width: 23px; }
.spaces .cur { background: #c8c8c8; color: #333; }
.graphs { display: flex; gap: 2px; }
.graphs svg { width: 39px; height: 22px; background: #535353; border-radius: 2px; }
.wifi { margin-left: 8px; } .vol { margin-left: 4px; } .orb { margin-left: 4px; } .shield { margin-left: 4px; } .box { margin-left: 10px; }
.clock { margin: 0 6px 0 5px; }
.dots { margin-left: 6px; }
```

FILE: chart.js
```js
const NS = 'http://www.w3.org/2000/svg';
const edge = '#646464';

function add(root, tag, attrs, text) {
  const el = document.createElementNS(NS, tag);
  for (const k in attrs) el.setAttribute(k, attrs[k]);
  if (text !== undefined) el.textContent = text;
  root.appendChild(el);
  return el;
}
function label(root, x, y, s, end, cls) {
  const a = { x: x, y: y, class: cls || 'lab' };
  if (end) { a.textLength = end - x; a.lengthAdjust = 'spacingAndGlyphs'; }
  add(root, 'text', a, s);
}
function fill(root, x0, y0, x1, y1, c) {
  add(root, 'rect', { x: x0, y: y0, width: x1 - x0, height: y1 - y0, fill: c, 'shape-rendering': 'crispEdges' });
}
function box(root, x0, y0, x1, y1, c) {
  fill(root, x0, y0, x1, y1, edge);
  fill(root, x0 + 1, y0 + 1, x1 - 1, y1 - 1, c);
}
function pin(root, x, y, c) {
  add(root, 'path', { d: `M${x - 3} ${y}h8v1h-1v1h-1v2h-1v14h-2v-14h-1v-2h-1v-1h-1z`, fill: c, 'shape-rendering': 'crispEdges' });
}
function neutral(root, x0, y0, x1, y1) {
  box(root, x0, y0, x1, y1, '#bebebe');
  fill(root, x0 + 1, y1 - 8, x1 - 1, y1 - 1, '#3c64ff');
}
function blob(root, x0, x1, y0) {
  add(root, 'rect', { x: x0, y: y0, width: x1 - x0, height: 16, rx: (x1 - x0) / 2, ry: 6, fill: '#cd0069' });
}

/* legend */
const lg = document.getElementById('legend');
box(lg, 576, 200, 592, 217, '#ffaaaa');
const heads = [['2D STRUCT:', 238, 566], ['MOTIFS:', 263, 545.5], ['CONSCORE:', 288, 569.5], ['Phospho.ELM:', 313, 576.5]];
heads.forEach(h => label(lg, 496, h[1], h[0], h[2]));
[[576, 226, '#c8640a'], [728, 226, '#ffff00'], [888, 226, '#00be14'], [1058, 226, '#ffbe64'],
 [576, 251, '#3c64ff'], [728, 251, '#bebebe'],
 [576, 276, '#c8c8ff'], [728, 276, '#9696ff'], [888, 276, '#6e6eff']
].forEach(b => box(lg, b[0], b[1], b[0] + 7, b[1] + 16, b[2]));
neutral(lg, 888, 251, 895, 267);
[[587.5, 238, 'Strand', 622.5], [739, 238, 'Helix', 767.5], [899, 238, 'Loop', 926.5], [1069, 238, '3/10 Helix', 1126.5],
 [587, 263, 'Favourable Context', 697.5], [739, 263, 'Sparse/Smart filtered', 853.5], [899, 263, 'Neutral', 938.5],
 [590, 288, 'low Conservation', 686.5], [742, 288, 'medium Conservation', 861.5], [902, 288, 'high Conservation', 1003.5],
 [585, 313, 'phosphorylated Serine', 710.5], [735, 313, 'phosphorylated Threonine', 880.5], [895, 313, 'phosphorylated Tyrosine', 1032.5],
 [984, 263, 'Annotated:', 1042.5], [1069, 263, 'TP', 1083.5], [1101, 263, 'FP', 1116.5], [1133, 263, 'TN', 1148.5], [1165, 263, 'U', 1173],
 [1210, 263, '<', 1216], [1230, 263, '<', 1236], [1251.5, 263, 'Assigned by', 1320.5], [1251, 274.5, 'homology', 1304]
].forEach(t => label(lg, t[0], t[1], t[2], t[3]));
[[582, '#32cd32'], [732, '#9696ff'], [892, '#966432']].forEach(p =>
  add(lg, 'path', { d: `M${p[0] - 4} 301h9v1h-1v1h-1v1h-1v1h-1v10h-1v-10h-1v-1h-1v-1h-1v-1h-1z`, fill: p[1], 'shape-rendering': 'crispEdges' }));
[[1058, '#cd0069'], [1090, '#bebe00'], [1122, '#bebe00'], [1154, '#ff0000']].forEach(e =>
  add(lg, 'rect', { x: e[0], y: 250, width: 7, height: 17, rx: 3.5, ry: 6, fill: e[1] }));
[[1200, 263], [1220, 258], [1240, 254]].forEach(q => {
  fill(lg, q[0], 251, q[0] + 7, 267, '#3c64ff');
  fill(lg, q[0], q[1], q[0] + 7, 267, '#ff3232');
});

/* feature chart */
const ch = document.getElementById('chart');
const third = v => 680 + Math.round(v / 3);
const pale = '#e6f5e6';
[[692, 704], [720, 732], [740, 784], [981, 1013], [1045, 1059], [1075, 1083]].forEach(b => fill(ch, b[0], 427, b[1], 1013, pale));
fill(ch, 784, 426, 979, 485, '#f5d3d3');
fill(ch, 784, 485, 979, 1013, '#f6c6c6');
[[834, 845], [869, 881], [909, 936]].forEach(b => {
  fill(ch, b[0], 426, b[1], 485, '#e8d4c4');
  fill(ch, b[0], 485, b[1], 1013, '#e8c8b9');
});
fill(ch, 784, 426, 794, 485, '#e9cfbf');
fill(ch, 784, 485, 794, 1013, '#eabfae');
fill(ch, 1008, 485, 1050, 1013, '#f5e6e4');
fill(ch, 1008, 485, 1013, 1013, '#e8e6d6');
fill(ch, 1045, 485, 1050, 1013, '#e8e6d6');

fill(ch, 690, 446, 1083, 465, '#9be49b');
fill(ch, 784, 446, 979, 465, '#9dd087');
fill(ch, 690, 466, 1083, 485, '#fa9f9f');
fill(ch, 784, 466, 979, 485, '#fa8787');
[[834, 845], [869, 881], [909, 936], [784, 794]].forEach(b => {
  fill(ch, b[0], 446, b[1], 465, '#97cd80');
  fill(ch, b[0], 466, b[1], 485, '#f08876');
});
[[692, 704], [720, 732], [740, 784], [981, 1013], [1045, 1059], [1075, 1083]].forEach(b => {
  fill(ch, b[0], 446, b[1], 465, '#92e092');
  fill(ch, b[0], 466, b[1], 485, '#f09c94');
});

[789, 889, 989].forEach(x => fill(ch, x, 388, x + 1, 1013, 'rgba(90,90,90,.5)'));
[689, 1083].forEach(x => fill(ch, x, 388, x + 1, 1013, '#969696'));
fill(ch, 690, 385, 1083, 386, '#8c8c8c');
for (let y = 405; y <= 1005; y += 20) {
  if (y === 465) continue;
  const c = y === 445 ? '#6ea06e' : y === 485 ? '#b45a5a' : 'rgba(110,110,110,.75)';
  fill(ch, 690, y, 1083, y + 1, c);
}

const curve = [32,286,34,238,52,240,58,246,66,248,72,262,78,268,86,268,96,282,104,286,118,290,122,283,132,282,138,272,144,262,150,268,156,276,166,280,170,272,180,266,186,258,194,256,204,248,212,250,220,246,228,242,236,248,250,248,262,254,276,258,286,262,296,264,300,270,306,266,314,272,318,280,324,286,328,292,334,294,342,306,350,298,360,298,368,312,378,314,386,308,396,308,404,312,412,306,420,312,430,318,438,322,446,318,454,304,462,298,468,290,478,288,486,294,494,290,500,280,506,272,512,272,518,286,526,298,534,300,544,296,552,288,556,298,564,288,570,286,580,292,590,286,600,292,608,286,618,290,630,296,634,288,640,300,650,296,660,302,670,292,680,280,688,290,700,294,712,300,718,308,724,304,736,308,750,306,768,306,776,292,790,288,800,290,812,298,824,304,836,300,850,298,864,292,876,284,884,270,892,252,904,246,916,250,926,250,936,246,950,244,966,244,980,250,990,260,1000,266,1010,272,1018,286,1026,292,1034,290,1040,296,1046,290,1056,282,1066,282,1076,270,1084,258,1094,252,1106,248,1120,246,1134,244,1150,248,1166,256,1180,252,1196,256,1210,260,1210,286];
const pts = [];
for (let i = 0; i < curve.length; i += 2) pts.push((680 + curve[i] / 3).toFixed(1) + ',' + (370 + curve[i + 1] / 3).toFixed(1));
add(ch, 'polygon', { points: pts.join(' '), fill: '#969696', stroke: '#505050', 'stroke-width': 1 });
fill(ch, 690, 465, 1083, 466, '#464646');

[698, 704, 709, 722, 726, 735, 788, 904, 1004, 1060, 1065, 1067, 1081].forEach(x => pin(ch, x, 387, '#32cd32'));
[707, 744].forEach(x => pin(ch, x, 387, '#9696ff'));
box(ch, 752, 414, 780, 421, '#ff00ff');
box(ch, 784, 409, 980, 426, '#ffaf87');
[[692, 705], [720, 733], [740, 795], [834, 846], [869, 882], [909, 937], [981, 1014], [1045, 1060], [1075, 1084]].forEach(b => box(ch, b[0], 434, b[1], 441, '#00be14'));

box(ch, 785, 495, 980, 500, '#00be14');
box(ch, 1008, 495, 1051, 500, '#00be14');
[[357,372],[399,414],[423,438],[450,471],[495,522],[612,624],[639,654],[669,690],[717,741],[780,807],[819,855]].forEach(b => box(ch, third(b[0]), 489, third(b[1]), 506, '#c8640a'));
box(ch, 855, 495, 861, 500, '#ffbe64');
box(ch, 967, 489, 978, 506, '#ffff00');
box(ch, 1024, 489, 1045, 506, '#ffff00');

label(ch, 496, 383, 'Feature', 538.5);
label(ch, 660, 383, '#', 666.5);
label(ch, 893, 383, 'Sequence: P53_HUMAN', 1031.7);
[[510, 401, 'PhosphoELM', 584.5], [510, 421, 'SMART/Pfam domain', 627.5], [510, 441, 'GlobPlot', 557.5],
 [510, 469, 'IUPRED', 553.5], [610, 459, 'Disorder', 657], [610, 484, 'Order', 642], [670, 469, '0.5', 686.5],
 [510, 501, 'Secondary Structure', 624.5]].forEach(t => label(ch, t[0], t[1], t[2], t[3], 'link'));

/* rows: name, count, label end, marks [kind, from, to] */
const G = 'G', N = 'N', E = 'E', V = '#6464ff';
const rows = [
  ['CLV_C14_Caspase3-7', 3, 642.5, [[N,576,594],[N,1074,1092],['#6e6eff',1191,1209]]],
  ['CLV_PCSK_SKI1_1', 4, 620.5, [[N,387,405],[G,774,792],[V,942,960],['#8282ff',1173,1191]]],
  ['CLV_Separin_Metazoa', 1, 640, [[N,540,558]]],
  ['DEG_APCC_DBOX_1', 1, 633.4, [[G,771,801]]],
  ['DEG_MDM2_SWIB_1', 1, 630, [[E,84,111]]],
  ['DEG_Nend_UBRbox_2', 1, 637.4, [[V,30,42]]],
  ['DEG_SPOP_SBC_1', 1, 621, [['#9696ff',303,321]]],
  ['DOC_CYCLIN_1', 3, 603.4, [['#7878ff',99,114],['#b4b4ff',945,960],[E,1170,1185]]],
  ['DOC_MAPK_gen_1', 1, 621, [[G,771,795]]],
  ['DOC_MAPK_MEF2A_6', 1, 644.7, [[G,444,474]]],
  ['DOC_PP1_RVXF_1', 3, 621.3, [[G,351,375],['#b4b4ff',1164,1188],['#b4b4ff',1167,1191]]],
  ['DOC_PP2B_LxvP_1', 1, 623.3, [[N,591,606]]],
  ['DOC_USP7_MATH_1', 5, 630.7, [['#c8c8ff',129,147],['#8c8cff',288,306],['#5f5fff',303,321],[E,1104,1122],[E,1116,1134]]],
  ['DOC_USP7_MATH_2', 1, 632.3, [[N,693,717]]],
  ['DOC_USP7_UBL2_3', 1, 626.3, [[V,1173,1191]]],
  ['DOC_WW_Pin1_4', 6, 612, [[E,117,138],['#b4b4ff',156,177],[E,261,282],[G,399,420],[N,468,489],[E,963,984]]],
  ['LIG_14-3-3_CanoR_1', 5, 637.3, [[N,570,597],[N,654,669],[G,666,684],[G,828,846],[N,873,900]]],
  ['LIG_Actin_WH2_1', 1, 611.3, [[N,1038,1092]]],
  ['LIG_APCC_ABBA_1', 1, 623.7, [[G,1041,1062]]],
  ['LIG_BRCT_BRCA1_1', 1, 628, [[N,342,360]]],
  ['LIG_Clathr_ClatBox_1', 1, 630.7, [[G,609,627]]],
  ['LIG_FHA_1', 3, 574.3, [[G,441,465],[N,531,555],[V,1008,1032]]],
  ['LIG_FHA_2', 3, 575.7, [['#6e6eff',75,99],[G,789,813],[G,873,897]]],
  ['LIG_LIR_Gen_1', 7, 596, [[V,78,90],[V,84,93],['#6e6eff',90,111],['#c8c8ff',999,1008],[V,1005,1023],[N,1044,1065]]],
  ['LIG_Pex14_2', 2, 584.3, [[V,84,102],[G,354,372]]],
  ['LIG_SH2_SRC', 4, 590.7, [[G,687,702]]]
];
rows.forEach((r, i) => {
  const y = 525 + i * 20;
  label(ch, 510, y - 4, r[0], r[2], 'link');
  label(ch, 664, y - 4, String(r[1]), 0, 'link');
  r[3].forEach(m => {
    const a = third(m[1]), b = third(m[2]);
    if (m[0] === E) blob(ch, a, b, y - 16);
    else if (m[0] === N) neutral(ch, a, y - 16, b, y + 1);
    else box(ch, a, y - 16, b, y + 1, m[0] === G ? '#bebebe' : m[0]);
  });
});
```
